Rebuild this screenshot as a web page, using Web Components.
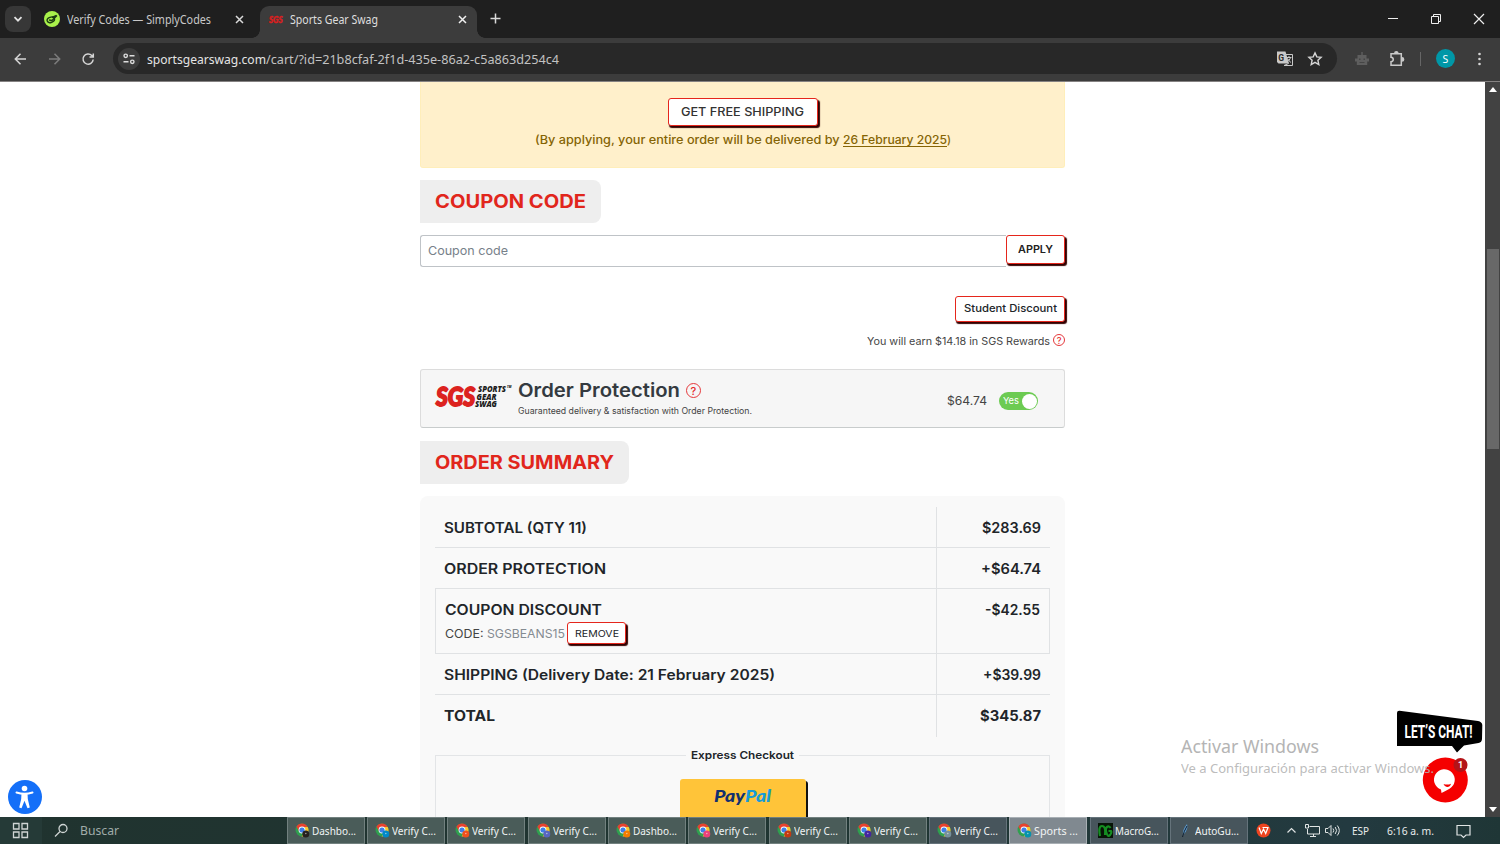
<!DOCTYPE html>
<html lang="en">
<head>
<meta charset="utf-8">
<title>Sports Gear Swag</title>
<style>
html,body{margin:0;height:100%;overflow:hidden;background:#fff}
body{font-family:Inter,"Liberation Sans",sans-serif;color:#212529}
</style>
</head>
<body>
<desktop-screen></desktop-screen>
<script>
const define = (name, html, setup) => customElements.define(name, class extends HTMLElement {
  connectedCallback() {
    if (this.shadowRoot) return;
    const t = document.createElement('template');
    t.innerHTML = typeof html === 'function' ? html(this) : html;
    this.attachShadow({mode: 'open'}).append(t.content.cloneNode(true));
    if (setup) setup(this);
  }
});

define('desktop-screen', `
<style>
:host{display:flex;flex-direction:column;width:1500px;height:844px;overflow:hidden}
.view{height:735px;display:flex;position:relative;overflow:hidden;flex:none}
cart-page{flex:1}
</style>
<tab-strip></tab-strip>
<tool-bar></tool-bar>
<div class="view"><cart-page></cart-page><page-scrollbar></page-scrollbar><access-badge></access-badge><chat-widget></chat-widget><activation-note></activation-note></div>
<task-bar></task-bar>`);

define('tab-strip', `
<style>
:host{display:flex;height:38px;background:#1f1f1f;font-family:"Noto Sans",sans-serif;color:#c8c8c8;flex:none;align-items:flex-start}
.menu{width:26px;height:26px;border-radius:8px;background:#373737;margin:6px 0 0 5px;display:grid;place-items:center}
.tab{display:flex;align-items:center;height:32px;margin-top:6px;box-sizing:border-box;padding-bottom:6px}
.one{width:229px;padding-left:13px}
.two{width:217px;background:#3c3c3c;border-radius:9px 9px 0 0;padding-left:9px;color:#dedede;position:relative}
.two:before,.two:after{content:"";position:absolute;bottom:0;width:8px;height:8px}
.two:before{left:-8px;background:radial-gradient(circle at 0 0,#0000 7.5px,#3c3c3c 8px)}
.two:after{right:-8px;background:radial-gradient(circle at 100% 0,#0000 7.5px,#3c3c3c 8px)}
svg{display:block;flex:none;overflow:visible}
.x{margin-left:auto}
.plus{margin:12px 0 0 12px}
.win{margin:12px 14px 0 auto;display:flex;gap:29px}
</style>
<div class="menu"><svg width="10" height="10" viewBox="0 0 10 10" fill="none" stroke="#e3e3e3" stroke-width="1.8"><path d="M1.5 3.2 5 6.7 8.500 3.200"/></svg></div>
<div class="tab one"><svg width="16" height="16" viewBox="0 0 16 16"><circle cx="8" cy="8" r="8" fill="#a9f24b"/><g fill="none" stroke="#1c3b12" stroke-width="1.4"><ellipse cx="6.800" cy="8.800" rx="3.800" ry="2.600" transform="rotate(-20 6.800 8.800)"/><path d="m5 9 3 .5 5-5M8 6.500l4.500-2"/></g></svg>
<fit-text w="144" size="12" style="margin-left:7px">Verify Codes — SimplyCodes</fit-text>
<svg class="x" style="margin-right:16px" width="9" height="9" viewBox="0 0 9 9" stroke="#dadada" stroke-width="1.5"><path d="m1 1 7 7M8 1 1 8"/></svg></div>
<div class="tab two"><svg width="15" height="12" viewBox="0 0 15 12"><text x="0" y="9.500" font-family="Lato" font-weight="900" font-style="italic" font-size="8.500" textLength="13.500" lengthAdjust="spacingAndGlyphs" fill="#d91f1f" stroke="#d91f1f" stroke-width=".5">SGS</text></svg>
<fit-text w="88" size="12" style="margin-left:6px">Sports Gear Swag</fit-text>
<svg class="x" style="margin-right:10px" width="9" height="9" viewBox="0 0 9 9" stroke="#f0f0f0" stroke-width="1.500"><path d="m1 1 7 7M8 1 1 8"/></svg></div>
<svg class="plus" width="13" height="13" viewBox="0 0 13 13" stroke="#dadada" stroke-width="1.500"><path d="M6.500 1.500v10M1.500 6.500h10"/></svg>
<div class="win"><svg width="14" height="14" viewBox="0 0 14 14" stroke="#eee"><path d="M2 6.500h10"/></svg><svg width="14" height="14" viewBox="0 0 14 14" stroke="#eee" fill="none"><path d="M2.500 4.500h7v7h-7zM4.500 4.500v-2h7v7h-2"/></svg><svg width="14" height="14" viewBox="0 0 14 14" stroke="#eee" stroke-width="1.200"><path d="m2 2 10 10M12 2 2 12"/></svg></div>`);

define('tool-bar', `
<style>
:host{display:flex;height:44px;flex:none;background:#3c3c3c;align-items:center;font-family:"Noto Sans",sans-serif;box-sizing:border-box;padding-bottom:3px;box-shadow:inset 0 -1px #858282}
svg{display:block;flex:none}
.nav{display:flex;gap:18px;padding-left:12px;width:101px;box-sizing:border-box}
.url{display:flex;align-items:center;width:1224px;height:31px;border-radius:16px;background:#282828;box-sizing:border-box;padding:0 14px 0 5px;margin-left:12px;color:#e4e4e4}
.site{width:22px;height:22px;border-radius:50%;background:#3c3c3c;display:grid;place-items:center;margin-right:7px}
.sub{color:#c2c2c2}
.av{width:19px;height:19px;border-radius:50%;background:#0097a7;color:#fff;display:grid;place-items:center;font-size:10.500px;margin-left:15px}
</style>
<div class="nav">
<svg width="16" height="16" viewBox="0 0 16 16" fill="none" stroke="#d6d6d6" stroke-width="1.500"><path d="M14 8H3.500M8.500 2.800 3.300 8l5.200 5.200"/></svg>
<svg width="16" height="16" viewBox="0 0 16 16" fill="none" stroke="#7c7c7c" stroke-width="1.500"><path d="M3 8h10.500M8.500 2.800 13.700 8l-5.200 5.200"/></svg>
<svg width="16" height="16" viewBox="0 0 16 16" fill="none" stroke="#d6d6d6" stroke-width="1.500"><path d="M13.200 8.500A5.100 5.100 0 1 1 11.800 4.500L13 5.800M13.300 2.500V6H9.500"/></svg></div>
<div class="url"><div class="site"><svg width="14" height="14" viewBox="0 0 14 14" fill="none" stroke="#dedede" stroke-width="1.400"><circle cx="3.700" cy="3.800" r="1.700"/><path d="M7.500 3.800h5M1.500 9.800h5"/><circle cx="10.300" cy="9.800" r="1.700"/></svg></div>
<fit-text w="119" size="13">sportsgearswag.com</fit-text><fit-text class="sub" w="293" size="13">/cart/?id=21b8cfaf-2f1d-435e-86a2-c5a863d254c4</fit-text>
<svg style="margin-left:auto" width="18" height="18" viewBox="0 0 18 18"><path d="M1 1.500h8.500l3.500 12H2.500L1 12z" fill="#c9c9c9"/><path d="M9.800 4.500h6.700v11H8l4.500-2z" fill="#282828" stroke="#c9c9c9"/><path d="M10.500 7.500h5M13 6v1.500M14.500 7.500c-.5 2-2 3.500-3.500 4.500M11.500 8.500c1 1.800 2 3 3.500 4" stroke="#c9c9c9" fill="none"/><text x="2.200" y="10.500" font-size="8.500" font-weight="700" font-family="Roboto" fill="#282828">G</text></svg>
<svg style="margin-left:13px" width="16" height="16" viewBox="0 0 16 16" fill="none" stroke="#d6d6d6" stroke-width="1.400"><path d="m8 1.900 1.800 4 4.300.4-3.200 2.900.9 4.300L8 11.300l-3.800 2.200.9-4.300-3.200-2.900 4.300-.4z"/></svg></div>
<svg style="margin-left:17px" width="16" height="16" viewBox="0 0 16 16" fill="#5e5e5e"><path d="M7.300 1h1.400v3h3.800v3.500H15v3h-1.800V14H2.800v-3.500H1v-3h2.500V4h3.800z"/><path d="M5 7.500h1.500V9H5zM9.500 7.500H11V9H9.500zM5.500 11h5v1h-5z" fill="#454545"/></svg>
<svg style="margin-left:18px" width="18" height="18" viewBox="0 0 18 18" fill="none" stroke="#c9c9c9" stroke-width="1.500"><path d="M3 3.800h10.300v11.400H3v-3.500c3-.2 3-4.200 0-4.400z"/><path d="M6.800 3.200a1.500 1.500 0 0 1 3 0M14 7.800a1.600 1.600 0 0 1 0 3.200" fill="#c9c9c9"/></svg>
<div style="width:1px;height:14px;background:#666;margin-left:14px"></div>
<div class="av">S</div>
<svg style="margin-left:20px" width="8" height="16" viewBox="0 0 8 16" fill="#d6d6d6"><circle cx="4.500" cy="3" r="1.300"/><circle cx="4.500" cy="8" r="1.300"/><circle cx="4.500" cy="13" r="1.300"/></svg>`);

define('page-scrollbar', `
<style>
:host{display:flex;flex-direction:column;width:15px;background:#424242;flex:none;align-items:center;box-sizing:border-box;padding:5px 0 5px}
.thumb{width:12px;height:200px;background:#686868;margin-top:157px}
i{width:0;height:0;border:4px solid #0000;flex:none}
.u{border-top:0;border-bottom:5px solid #fff}.d{border-bottom:0;border-top:5px solid #fff;margin-top:auto}
</style><i class="u"></i><div class="thumb"></div><i class="d"></i>`);

define('sgs-button', `
<style>:host{display:flex;align-items:center;justify-content:center;box-sizing:border-box;background:#fff;border:1px solid #e5261c;border-radius:3px;box-shadow:1.500px 2px 1px #300}</style><slot></slot>`);

define('section-title', `
<style>:host{display:flex;align-items:center;width:max-content;height:43px;box-sizing:border-box;background:#eee;border-radius:0 8px 8px 0;padding:0 15px 2px;color:#e1261c}</style><slot></slot>`);

define('help-dot', `
<style>:host{display:inline-grid;place-items:center;box-sizing:border-box;border:1px solid #e5383b;border-radius:50%;color:#e5262b;font-weight:500}</style>?`);

define('summary-row', `
<style>
:host{display:flex;flex:none;box-sizing:border-box;height:41px;border-bottom:1px solid #e0e2e4}
.l{flex:1;display:flex;flex-direction:column;padding:0 0 0 9px}
.r{width:114px;box-sizing:border-box;border-left:1px solid #e0e2e4;display:flex;justify-content:flex-end;padding-right:9px}
.line{height:41px;display:flex;align-items:center}
:host([last]){border:0;height:42px}
:host([boxed]){height:65px;border-left:1px solid #e0e2e4;border-right:1px solid #e0e2e4}
:host([boxed]) .r{width:113px}
</style>
<div class="l"><div class="line"><slot></slot></div><slot name="extra"></slot></div>
<div class="r"><div class="line"><slot name="price"></slot></div></div>`);

define('cart-page', `
<style>
:host{display:block;overflow:hidden;background:#fff}
.col{width:645px;margin-left:420px;display:flex;flex-direction:column}
.ship{height:86px;box-sizing:border-box;background:#fff0cb;border:1px solid #ffeeba;border-top:0;border-radius:0 0 3px 3px;display:flex;flex-direction:column;align-items:center;padding-top:16px;color:#856404}
.ship sgs-button{width:150px;height:28px;color:#333;margin-bottom:7px}
.row{display:flex}
.coupon{margin-top:12px;height:32px;color:#77818a}
.field{flex:1;box-sizing:border-box;border:1px solid #bfc3c7;border-right:0;border-radius:3px 0 0 3px;display:flex;align-items:center;padding:0 0 2px 7px}
.coupon sgs-button{width:59px;height:29px;color:#222;padding-bottom:1px}
.stud{align-self:flex-end;width:110px;height:26px;margin-top:29px;padding-bottom:1px}
.earn{align-self:flex-end;display:flex;align-items:center;gap:3px;margin-top:9px;height:19px;color:#444}
.protect{height:59px;box-sizing:border-box;border:1px solid #dcdcdc;border-bottom-color:#c8cccc;border-radius:3px;background:#f6f6f6;margin-top:19px;display:flex;padding-left:15px}
.pt{margin-left:6px;width:420px;padding-top:8px;display:flex;flex-direction:column}
.pt .row{height:25px;align-items:center;gap:6px;color:#343a40}
.pt fit-text{flex:none}
.toggle{width:39px;height:18px;border-radius:9px;background:#6ccb52;display:flex;align-items:center;justify-content:space-between;box-sizing:border-box;padding:0 1px 0 4px;color:#fff;margin:22px 0 0 12px}
.toggle i{width:15px;height:15px;border-radius:50%;background:#fff}
.sum{margin-top:12px;height:330px;background:#f9f9f9;border-radius:8px 8px 0 0;padding:11px 15px 0;display:flex;flex-direction:column}
.code{display:flex;align-items:center;height:23px;margin-top:-8px}
.code sgs-button{width:59px;height:22px;margin-left:2px;margin-top:-1px}
fieldset{flex:none;border:1px solid #e3e5e7;margin:11px 0 0;padding:0;min-width:0;height:120px;display:flex;flex-direction:column;align-items:center}
legend{margin:auto;padding:0 5px;display:flex;height:15px;align-items:center}
.pp{width:126px;height:60px;border-radius:3px;background:#ffc439;box-shadow:2px 2px #111;margin-top:16px;display:flex;justify-content:center;padding-top:7px;box-sizing:border-box}
</style>
<div class="col">
<div class="ship"><sgs-button><fit-text w="123" size="11.600" weight="500">GET FREE SHIPPING</fit-text></sgs-button>
<div class="row"><fit-text w="308" size="11.600" weight="500">(By applying, your entire order will be delivered by&nbsp;</fit-text><fit-text w="104" size="11.600" weight="500" u>26 February 2025</fit-text><fit-text w="4" size="11.600" weight="500">)</fit-text></div></div>
<section-title style="margin-top:12px"><fit-text w="151" size="18.500" weight="700">COUPON CODE</fit-text></section-title>
<div class="row coupon"><div class="field"><fit-text w="80" size="12.300">Coupon code</fit-text></div><sgs-button><fit-text w="35" size="10.200" weight="600">APPLY</fit-text></sgs-button></div>
<sgs-button class="stud"><fit-text w="93" size="10.500" weight="500">Student Discount</fit-text></sgs-button>
<div class="earn"><fit-text w="183" size="10.500" style="margin-top:2px">You will earn $14.18 in SGS Rewards</fit-text><help-dot style="width:12px;height:12px;font-size:9px;margin-top:-1px"></help-dot></div>
<div class="protect"><svg width="76" height="28" viewBox="0 0 76 28" style="margin-top:13px;flex:none;overflow:visible;font-family:Lato;font-weight:900;font-style:italic"><text x="0" y="22.800" font-size="26.500" textLength="39" lengthAdjust="spacingAndGlyphs" fill="#dc231f" stroke="#dc231f" stroke-width="1.800">SGS</text><g fill="#1c1c1c" font-size="8.500" font-family="Open Sans" font-weight="800"><text x="42" y="9" textLength="28" lengthAdjust="spacingAndGlyphs">SPORTS</text><text x="40.500" y="16.500" textLength="20" lengthAdjust="spacingAndGlyphs">GEAR</text><text x="39" y="24" textLength="22" lengthAdjust="spacingAndGlyphs">SWAG</text><text x="71" y="5" font-size="3">TM</text></g></svg>
<div class="pt"><div class="row"><fit-text w="162" size="18.800" weight="600">Order Protection</fit-text><help-dot style="width:15px;height:15px;font-size:11px"></help-dot></div><fit-text style="margin-top:3px;color:#444" w="234" size="8.600">Guaranteed delivery &amp; satisfaction with Order Protection.</fit-text></div>
<fit-text style="margin:23px 0 0 9px;color:#444" w="40" size="12.300">$64.74</fit-text><div class="toggle"><fit-text w="16" size="9.500" style="margin-top:-1px">Yes</fit-text><i></i></div></div>
<section-title style="margin-top:13px"><fit-text w="179" size="18.500" weight="700">ORDER SUMMARY</fit-text></section-title>
<div class="sum">
<summary-row><fit-text w="143" size="14" weight="600">SUBTOTAL (QTY 11)</fit-text><fit-text slot="price" w="59" size="14" weight="600">$283.69</fit-text></summary-row>
<summary-row><fit-text w="162" size="14" weight="600">ORDER PROTECTION</fit-text><fit-text slot="price" w="60" size="14" weight="600">+$64.74</fit-text></summary-row>
<summary-row boxed><fit-text w="157" size="14" weight="600">COUPON DISCOUNT</fit-text><fit-text slot="price" w="55" size="14" weight="600">-$42.55</fit-text><div slot="extra" class="code"><fit-text w="42" size="12" style="color:#444">CODE:&nbsp;</fit-text><fit-text w="78" size="12" style="color:#848b91">SGSBEANS15</fit-text><sgs-button><fit-text w="44" size="9.600">REMOVE</fit-text></sgs-button></div></summary-row>
<summary-row><fit-text w="331" size="14" weight="600">SHIPPING (Delivery Date: 21 February 2025)</fit-text><fit-text slot="price" w="58" size="14" weight="600">+$39.99</fit-text></summary-row>
<summary-row last><fit-text w="51" size="14" weight="700">TOTAL</fit-text><fit-text slot="price" w="61" size="14" weight="700">$345.87</fit-text></summary-row>
<fieldset><legend><fit-text w="103" size="10.800" weight="600">Express Checkout</fit-text></legend><div class="pp"><svg width="60" height="24" viewBox="0 0 60 24" style="font:italic 900 16px Lato"><text x="1" y="16" textLength="31" lengthAdjust="spacingAndGlyphs" fill="#12306f">Pay</text><text x="32" y="16" textLength="26" lengthAdjust="spacingAndGlyphs" fill="#179bd7">Pal</text></svg></div></fieldset>
</div></div>`);

define('access-badge', `
<style>:host{position:absolute;left:8px;top:698px;display:block}svg{display:block}</style>
<svg width="34" height="34" viewBox="0 0 34 34"><circle cx="17" cy="17" r="17" fill="#146ff8"/><circle cx="16.500" cy="8.500" r="2.800" fill="#fff"/><path d="M8.500 12.500q8 2.600 16 0" stroke="#fff" stroke-width="2" fill="none" stroke-linecap="round"/><path d="M13.500 13h6l.3 6 2 8.500-2.300.7-3-7.500-3 7.500-2.300-.7 2-8.500z" fill="#fff"/></svg>`);

define('chat-widget', `
<style>:host{position:absolute;left:1395px;top:628px;display:block}svg{display:block}</style>
<svg width="90" height="96" viewBox="0 0 90 96"><path d="M2 3q0-2.500 2.500-2.300L83 11q4 .8 4.300 4L87 29q-.2 3.500-3.500 4L69 35.500l-7 7-5-6.500H2z" fill="#000"/><text x="9.500" y="28" font-family="Roboto" font-weight="700" font-size="18" textLength="68" lengthAdjust="spacingAndGlyphs" fill="#fff">LET’S CHAT!</text><circle cx="50.300" cy="70" r="22.500" fill="#f50000"/><path d="M46 79.500a10.400 10.400 0 1 1 8.500-.8q-3.500 2-8 4.300z" fill="#fff"/><path d="M48.500 74q4 1.300 7.500-.3-1 3.500-4 3.300-2.500-.3-3.500-3z" fill="#f50000"/><circle cx="65.500" cy="55" r="7" fill="#b31418"/><text x="65.500" y="58.200" text-anchor="middle" font-family="Roboto" font-weight="700" font-size="9" fill="#fff">1</text></svg>`);

define('activation-note', `
<style>:host{position:absolute;left:1181px;top:653px;display:flex;flex-direction:column;font-family:"Noto Sans",sans-serif;line-height:22px}</style>
<fit-text w="138" size="17.500" style="color:#b4b4b4">Activar Windows</fit-text><fit-text w="253" size="12.800" style="color:#b4b4b4e6">Ve a Configuración para activar Windows.</fit-text>`);

const chromeIcon = c => `<svg width="15" height="15" viewBox="0 0 15 15"><circle cx="7" cy="7" r="6.500" fill="#2fa04f"/><path d="M1.400 3.700A6.500 6.500 0 0 1 12.700 3.900H7.200L4.200 8.600z" fill="#e8412f"/><path d="M12.700 3.900a6.500 6.500 0 0 1-6.100 9.600l3.100-5.200V3.900z" fill="#fbc52d"/><circle cx="7" cy="7" r="3.400" fill="#fff"/><circle cx="7" cy="7" r="2.600" fill="#3e7fe8"/><circle cx="10.800" cy="10.900" r="3.500" fill="${c}"/><circle cx="10.800" cy="10.500" r=".8" fill="#fff8"/></svg>`;
const appIcons = {
  macro: '<svg width="15" height="15" viewBox="0 0 15 15"><path d="M0 0h15v15H0z" fill="#071407"/><path d="M2 13Q0 3 4 3t3 9M12.500 5Q11 2.500 9 4t-.5 6 3.500 2 1-4h-2.500" stroke="#158e22" stroke-width="2.200" fill="none"/></svg>',
  feather: '<svg width="15" height="15" viewBox="0 0 15 15"><path d="M5 13q-1-6 4-12 1.500 5-3 10z" fill="#5c9bd0"/><path d="M4.500 14Q6 8 9 3" stroke="#101c2a" fill="none"/></svg>'
};
define('task-button', el => `
<style>
:host{display:flex;align-items:center;width:78px;height:27px;box-sizing:border-box;border:1px solid #72817f;background:#4a5c59;color:#f1f4f4;padding-left:7px;gap:2px;flex:none}
:host([cool]){background:#47555c;border-color:#65737b}
:host([active]){background:#808990;border-color:#a8afb4}
svg{display:block;flex:none}
</style>${appIcons[el.getAttribute('icon')] || chromeIcon(el.getAttribute('icon'))}<slot></slot>`);

define('task-bar', () => {
  const items = [['Dashbo...', '#26211f'], ['Verify C...', '#0288c8'], ['Verify C...', '#f0501e'], ['Verify C...', '#5866c0'], ['Dashbo...', '#f57c00'], ['Verify C...', '#ec407a'], ['Verify C...', '#c43a12'], ['Verify C...', '#4527a0'], ['Verify C...', '#78909c', 'cool'], ['Sports ...', '#0693ad', 'active'], ['MacroG...', 'macro', 'cool'], ['AutoGu...', 'feather', 'cool']];
  return `
<style>
:host{display:flex;align-items:center;height:27px;flex:none;background:linear-gradient(90deg,#20332f,#203633 60%,#233a40 90%,#1f3636);color:#e8ecec;font-family:"Noto Sans",sans-serif}
svg{display:block;flex:none}
.apps{display:flex;gap:2.300px;margin-left:auto}
.start{width:42px;height:27px;background:#253a37;display:flex;align-items:center;padding-left:12px;box-sizing:border-box}
.tray{width:252px;display:flex;align-items:center;height:27px}
</style>
<div class="start"><svg width="17" height="17" viewBox="0 0 17 17" fill="none" stroke="#cfd5d4" stroke-width="1.300"><path d="M1.500 1.500h5.500v5.500H1.500zM10 1.500h5.500v5.500H10zM1.500 10h5.500v5.500H1.500zM10 10h5.500v5.500H10z"/></svg></div>
<svg style="margin-left:12px" width="15" height="15" viewBox="0 0 15 15" fill="none" stroke="#cfd5d4" stroke-width="1.300"><circle cx="9" cy="5.500" r="4"/><path d="M6 8.500 1 13.500"/></svg>
<fit-text w="39" size="12.500" style="margin-left:11px;color:#a0acaa">Buscar</fit-text>
<div class="apps">${items.map(([t, i, m]) => `<task-button icon="${i}" ${m || ''}><fit-text w="44" size="11">${t}</fit-text></task-button>`).join('')}</div>
<div class="tray">
<svg style="margin-left:8px" width="15" height="15" viewBox="0 0 15 15"><circle cx="7.500" cy="7.500" r="7" fill="#ee4420"/><path d="M3 4.500 5.300 10.500 7.500 6 9.700 10.500 12 4.500H6.500" fill="none" stroke="#fff" stroke-width="1.200"/></svg>
<svg style="margin-left:15px" width="11" height="11" viewBox="0 0 11 11" fill="none" stroke="#e0e4e4" stroke-width="1.200"><path d="m1.500 7.500 4-4 4 4"/></svg>
<svg style="margin-left:7px" width="17" height="15" viewBox="0 0 17 15" fill="none" stroke="#e0e4e4"><path d="M5.500 3.500h10v7.500h-12V6M9.500 11v2.500M6 13.500h6M1.500 1.500h3v3.500h-3z"/></svg>
<svg style="margin-left:3px" width="17" height="15" viewBox="0 0 17 15" fill="none" stroke="#e0e4e4"><path d="M1.500 5.500h2.500l3-3v10l-3-3H1.500zM9 5.500q1.500 2 0 4M11.200 4q2.800 3.500 0 7M13.300 2.500q4 5 0 10"/></svg>
<fit-text w="17" size="11.500" style="margin-left:11px">ESP</fit-text>
<fit-text w="47" size="11.500" style="margin-left:18px">6:16 a. m.</fit-text>
<svg style="margin-left:22px" width="15" height="16" viewBox="0 0 15 16" fill="none" stroke="#e0e4e4" stroke-width="1.200"><path d="M1 2.500h13v9.500H10l-2.500 2.500L5 12H1z"/></svg>
</div>`;
});

// Single line of text drawn at an exact width: w (px), size (px), weight, u (underlined).
define('fit-text', el => `
<style>
:host{display:inline-block;white-space:nowrap;width:${el.getAttribute('w')}px;font-size:${el.getAttribute('size')}px;font-weight:${el.getAttribute('weight') || 400}}
span{display:inline-block;transform-origin:0 50%}
:host([u]) span{text-decoration:underline;text-underline-offset:2px}
</style><span><slot></slot></span>`, el => {
  const s = el.shadowRoot.querySelector('span');
  const natural = s.getBoundingClientRect().width;
  if (natural) s.style.transform = `scaleX(${el.getAttribute('w') / natural})`;
});
</script>
</body>
</html>
